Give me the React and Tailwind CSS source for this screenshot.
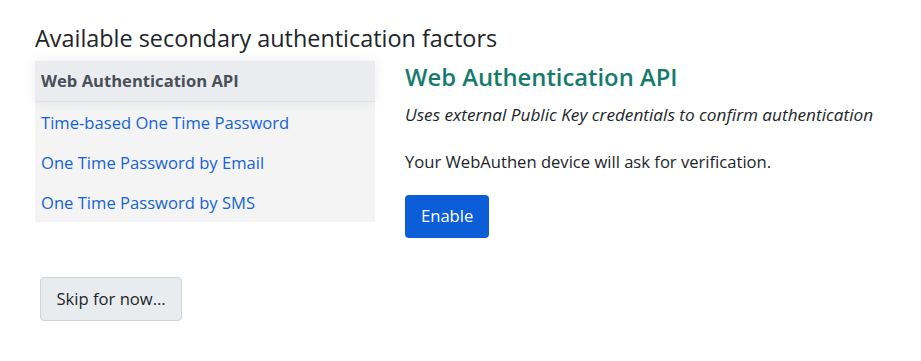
export default function App() {
  const font = { fontFamily: '"Open Sans", "Noto Sans", sans-serif' };
  return (
    <div className="w-[921px] h-[361px] bg-white text-[#212529]" style={font}>
      <div className="pl-[35px] pt-[23px]">
        <h2 className="text-[23.4px] leading-[30px] font-normal">Available secondary authentication factors</h2>
        <div className="flex mt-[8px]">
          <div className="w-[340px] bg-[#f4f4f5] flex flex-col self-start">
            <div className="h-[41px] flex items-center px-[6px] bg-[#ebecf0] border-b border-[#dee2e6] font-bold text-[16.6px] text-[#495057] shadow-[0_0_12px_rgba(0,0,0,0.08)]">
              Web Authentication API
            </div>
            <a className="h-[40px] flex items-center px-[6px] pt-[2px] text-[16.6px] text-[#1463d6]">Time-based One Time Password</a>
            <a className="h-[40px] flex items-center px-[6px] pt-[2px] text-[16.6px] text-[#1463d6]">One Time Password by Email</a>
            <a className="h-[40px] flex items-center px-[6px] pt-[2px] text-[16.6px] text-[#1463d6]">One Time Password by SMS</a>
          </div>
          <div className="ml-[30px] flex flex-col">
            <h3 className="text-[23.8px] leading-[30px] font-semibold text-[#167b6c] mt-[1px]">Web Authentication API</h3>
            <p className="italic text-[17.2px] leading-[24px] mt-[11px]">Uses external Public Key credentials to confirm authentication</p>
            <p className="text-[16.6px] leading-[24px] mt-[23px]">Your WebAuthen device will ask for verification.</p>
            <div className="mt-[21px]">
              <button className="h-[43px] px-[16px] bg-[#0b5ed7] text-white text-[16.6px] rounded-[4px]">Enable</button>
            </div>
          </div>
        </div>
        <div className="mt-[39px] ml-[5px]">
          <button className="h-[44px] px-[15.5px] bg-[#e9ecef] border border-[#ced4da] rounded-[4px] text-[16.6px] text-[#212529]">Skip for now…</button>
        </div>
      </div>
    </div>
  );
}
